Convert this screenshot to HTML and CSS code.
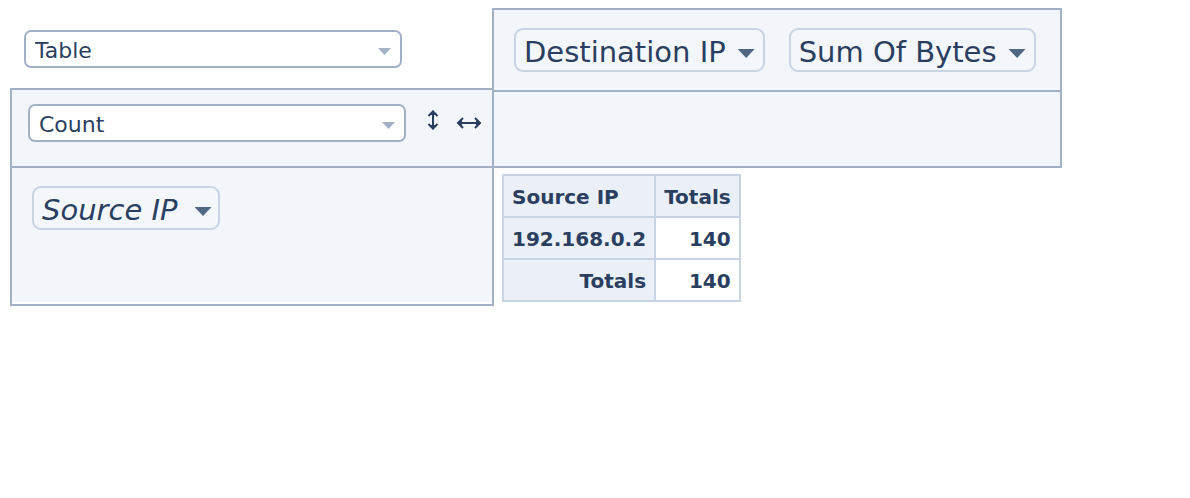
FILE: index.html
```
<!DOCTYPE html>
<html lang="en">
<head>
<meta charset="utf-8">
<title>Pivot table</title>
<link rel="stylesheet" href="styles.css">
</head>
<body>
<main class="pivot">
  <section class="side">
    <div class="renderer">
      <span class="picker"><select class="picker-select" aria-label="Renderer"><option>Table</option></select></span>
    </div>
    <div class="panel aggregator">
      <span class="picker"><select class="picker-select" aria-label="Aggregator"><option>Count</option></select></span>
      <button class="order order-rows" type="button" aria-label="Row order"><svg width="12" height="20" viewBox="0 0 12 20"><path d="M6 2V18M1.500 6L6 1.500L10.500 6M1.500 14L6 18.500L10.500 14"/><path class="tip" d="M6 0L9 5H3ZM6 20L9 15H3Z"/></svg></button>
      <button class="order order-cols" type="button" aria-label="Column order"><svg width="26" height="14" viewBox="0 0 26 14"><path d="M2 7H24M7 2L2 7L7 12M19 2L24 7L19 12"/><path class="tip" d="M1 7L6 4V10ZM25 7L20 4V10Z"/></svg></button>
    </div>
    <div class="panel row-fields">
      <button class="field field-unused" type="button">Source IP<span class="caret"></span></button>
    </div>
  </section>
  <section class="content">
    <div class="panel unused-fields">
      <button class="field" type="button">Destination IP<span class="caret"></span></button>
      <button class="field" type="button">Sum Of Bytes<span class="caret"></span></button>
    </div>
    <div class="panel col-fields"></div>
    <table class="result">
      <thead>
        <tr><th scope="col">Source IP</th><th scope="col">Totals</th></tr>
      </thead>
      <tbody>
        <tr><th scope="row">192.168.0.2</th><td>140</td></tr>
        <tr><th class="total-label" scope="row">Totals</th><td>140</td></tr>
      </tbody>
    </table>
  </section>
</main>
</body>
</html>
```
FILE: styles.css
```
* {
  box-sizing: border-box;
}

body {
  margin: 0;
  padding: 8px 10px;
  background: #fff;
  color: #2a3f5f;
  font-family: Verdana, "DejaVu Sans", sans-serif;
}

.pivot {
  display: flex;
  align-items: flex-start;
}

.side {
  flex: none;
}

.content {
  flex: 0 1 570px;
  margin-left: -2px;
}

.renderer {
  padding: 22px 14px 20px;
}

.panel {
  border: 2px solid #a2b1c6;
  background: #f2f5fa;
}

.aggregator {
  display: flex;
  align-items: flex-start;
  padding: 14px 10px 24px 16px;
  border-bottom: 0;
}

.row-fields {
  padding: 18px 20px 74px;
  box-shadow: inset 0 -2px #fff;
}

.unused-fields {
  display: flex;
  gap: 24px;
  padding: 18px 20px;
  border-bottom: 0;
}

.col-fields {
  min-height: 78px;
}

.picker {
  display: block;
  position: relative;
  width: 378px;
}

.picker::after {
  content: "";
  position: absolute;
  top: 18px;
  right: 11px;
  width: 13px;
  height: 7px;
  background: #a2b1c6;
  clip-path: polygon(0 0, 100% 0, 50% 100%);
  pointer-events: none;
}

.picker-select {
  display: block;
  width: 100%;
  height: 38px;
  padding: 2px 30px 0 9px;
  border: 2px solid #a2b1c6;
  border-radius: 7px;
  appearance: none;
  background: #fff;
  color: inherit;
  font: 22px "DejaVu Sans", sans-serif;
}

.order {
  padding: 0;
  border: 0;
  background: none;
  line-height: 0;
}

.order path {
  fill: none;
  stroke: #2a3f5f;
  stroke-width: 2;
}

.order .tip {
  fill: #2a3f5f;
  stroke: none;
}

.order-rows {
  margin: 6px 0 0 21px;
}

.order-cols {
  margin: 12px 0 0 17px;
}

.field {
  display: flex;
  align-items: center;
  gap: 12px;
  height: 44px;
  padding: 3px 8px 0;
  border: 2px solid #c8d4e3;
  border-radius: 9px;
  background: #f3f6fa;
  color: inherit;
  font: 29px "DejaVu Sans", sans-serif;
  white-space: nowrap;
}

.field-unused {
  gap: 17px;
  padding-right: 6px;
  font-style: italic;
}

.caret {
  width: 17px;
  height: 9px;
  margin-top: 4px;
  background: #506784;
  clip-path: polygon(0 0, 100% 0, 50% 100%);
}

.result {
  margin: 6px 0 0 10px;
  border-collapse: collapse;
  font-size: 20px;
  font-weight: bold;
  line-height: 24px;
}

.result th,
.result td {
  padding: 9px 8px 7px;
  border: 2px solid #c8d4e3;
  text-align: right;
}

.result th {
  background: #ebf0f8;
  text-align: left;
}

.result .total-label {
  text-align: right;
}
```
